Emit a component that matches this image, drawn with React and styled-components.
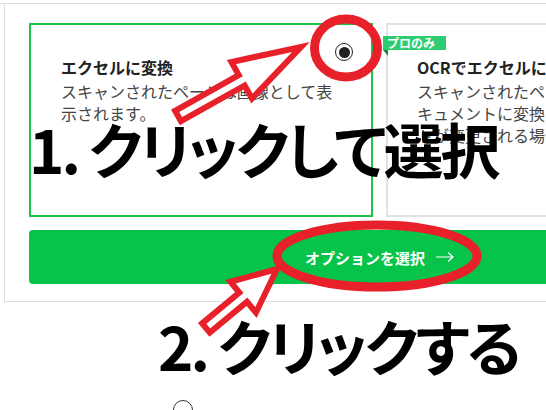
import React from 'react';
import styled, { createGlobalStyle } from 'styled-components';

const RED = '#e8202a';

const GlobalStyle = createGlobalStyle`
    body {
        margin: 0;
        background: #fff;
        font-family: "Noto Sans CJK JP", "Noto Sans", sans-serif;
        color: #222;
    }
`;

// outlined arrow, built along its axis and turned toward the tip
const arrowPoints = (tail, tip, shaft, head, headLen) => {
    const dx = tip[0] - tail[0];
    const dy = tip[1] - tail[1];
    const len = Math.hypot(dx, dy);
    const ux = dx / len, uy = dy / len;
    const nx = -uy, ny = ux;
    const local = [
        [0, -shaft], [len - headLen, -shaft], [len - headLen, -head], [len, 0],
        [len - headLen, head], [len - headLen, shaft], [0, shaft],
    ];
    return local
        .map(([a, b]) => `${tail[0] + ux * a + nx * b},${tail[1] + uy * a + ny * b}`)
        .join(' ');
};

const options = [
    {
        title: 'エクセルに変換',
        lines: ['スキャンされたページは画像として表', '示されます。'],
        selected: true,
    },
    {
        title: 'OCRでエクセルに変換',
        lines: ['スキャンされたページは編集可能なド', 'キュメントに変換されます。レイアウ', 'トが変更される場合があります。'],
        pro: true,
    },
];

function App() {
    return (
        <Page>
            <GlobalStyle />
            <TopRule>
                <Panel>
                    <Cards>
                        {options.map((o) => (
                            <Card key={o.title} selected={o.selected}>
                                {o.pro && <Badge>プロのみ</Badge>}
                                {o.selected && <Radio />}
                                <Title>{o.title}</Title>
                                <Desc>
                                    {o.lines.map((l) => <div key={l}>{l}</div>)}
                                </Desc>
                            </Card>
                        ))}
                    </Cards>
                    <Button>
                        オプションを選択
                        <svg width="18" height="10" viewBox="0 0 18 10">
                            <path d="M0 5 H17 M12 0.5 L17 5 L12 9.5" fill="none" stroke="#fff" strokeWidth="1.2" />
                        </svg>
                    </Button>
                </Panel>
            </TopRule>
            <NextRow>
                <EmptyRadio />
            </NextRow>

            <Marks width="546" height="410" viewBox="0 0 546 410">
                <polygon points={arrowPoints([178, 116], [301, 47], 6, 21, 68)} fill="#fff" stroke={RED} strokeWidth="6" strokeLinejoin="miter" />
                <ellipse cx="346" cy="48" rx="31.5" ry="29" fill="none" stroke={RED} strokeWidth="9" />
                <polygon points={arrowPoints([206, 328], [277, 269], 6, 20, 44)} fill="#fff" stroke={RED} strokeWidth="6" strokeLinejoin="miter" />
                <ellipse cx="377" cy="256" rx="100" ry="31" fill="none" stroke={RED} strokeWidth="9" />
            </Marks>
            <Caption top={118} left={29}>1. クリックして選択</Caption>
            <Caption top={315} left={158}>2. クリックする</Caption>
        </Page>
    );
}

export default App;

const Page = styled.div`
    position: relative;
    width: 546px;
    height: 410px;
    overflow: hidden;
`

const TopRule = styled.div`
    margin-top: 3px;
    border-top: 1px solid #ddd;
`

const Panel = styled.div`
    width: 701px;
    margin-left: 4px;
    border: 1px solid #ddd;
    border-top: none;
    padding: 19px 24px 17px 24px;
`

const Cards = styled.div`
    display: grid;
    grid-template-columns: 344px 344px;
    gap: 13px;
`

const Card = styled.div`
    position: relative;
    height: 194px;
    box-sizing: border-box;
    border: 2px solid ${(p) => (p.selected ? '#1fbf50' : '#e2e2e2')};
    padding: 31px 30px 0 ${(p) => (p.selected ? 30 : 29)}px;
`

const Title = styled.div`
    font-size: 16px;
    line-height: 22px;
    font-weight: 700;
    color: #222;
`

const Desc = styled.div`
    margin-top: 2px;
    font-size: 16px;
    line-height: 22px;
    color: #444;
    white-space: nowrap;
`

const Radio = styled.div`
    position: absolute;
    top: 18px;
    right: 18px;
    width: 18px;
    height: 18px;
    box-sizing: border-box;
    border: 1.5px solid #222;
    border-radius: 50%;
    display: flex;
    align-items: center;
    justify-content: center;

    &::after {
        content: '';
        width: 11px;
        height: 11px;
        border-radius: 50%;
        background: #222;
    }
`

const Badge = styled.div`
    position: absolute;
    left: -5px;
    top: 11px;
    width: 63px;
    height: 14px;
    padding-left: 4px;
    box-sizing: border-box;
    background: #2ecc71;
    color: #fff;
    font-size: 12px;
    line-height: 14px;
    font-weight: 700;

    &::after {
        content: '';
        position: absolute;
        left: 0;
        top: 14px;
        border-top: 6px solid #178a45;
        border-left: 5px solid transparent;
    }
`

const Button = styled.div`
    margin-top: 13px;
    height: 54px;
    border-radius: 4px;
    background: #06c449;
    color: #fff;
    font-size: 15px;
    font-weight: 700;
    display: flex;
    align-items: center;
    justify-content: center;
    gap: 11px;
`

const NextRow = styled.div`
    padding: 98px 0 0 173px;
`

const EmptyRadio = styled.div`
    width: 20px;
    height: 20px;
    box-sizing: border-box;
    border: 1px solid #333;
    border-radius: 50%;
`

const Marks = styled.svg`
    position: absolute;
    left: 0;
    top: 0;
    pointer-events: none;
`

const Caption = styled.div`
    position: absolute;
    top: ${(p) => p.top}px;
    left: ${(p) => p.left}px;
    font-size: 60px;
    line-height: 1;
    font-weight: 700;
    letter-spacing: -3px;
    color: #000;
    white-space: nowrap;
    font-feature-settings: "palt";
`
